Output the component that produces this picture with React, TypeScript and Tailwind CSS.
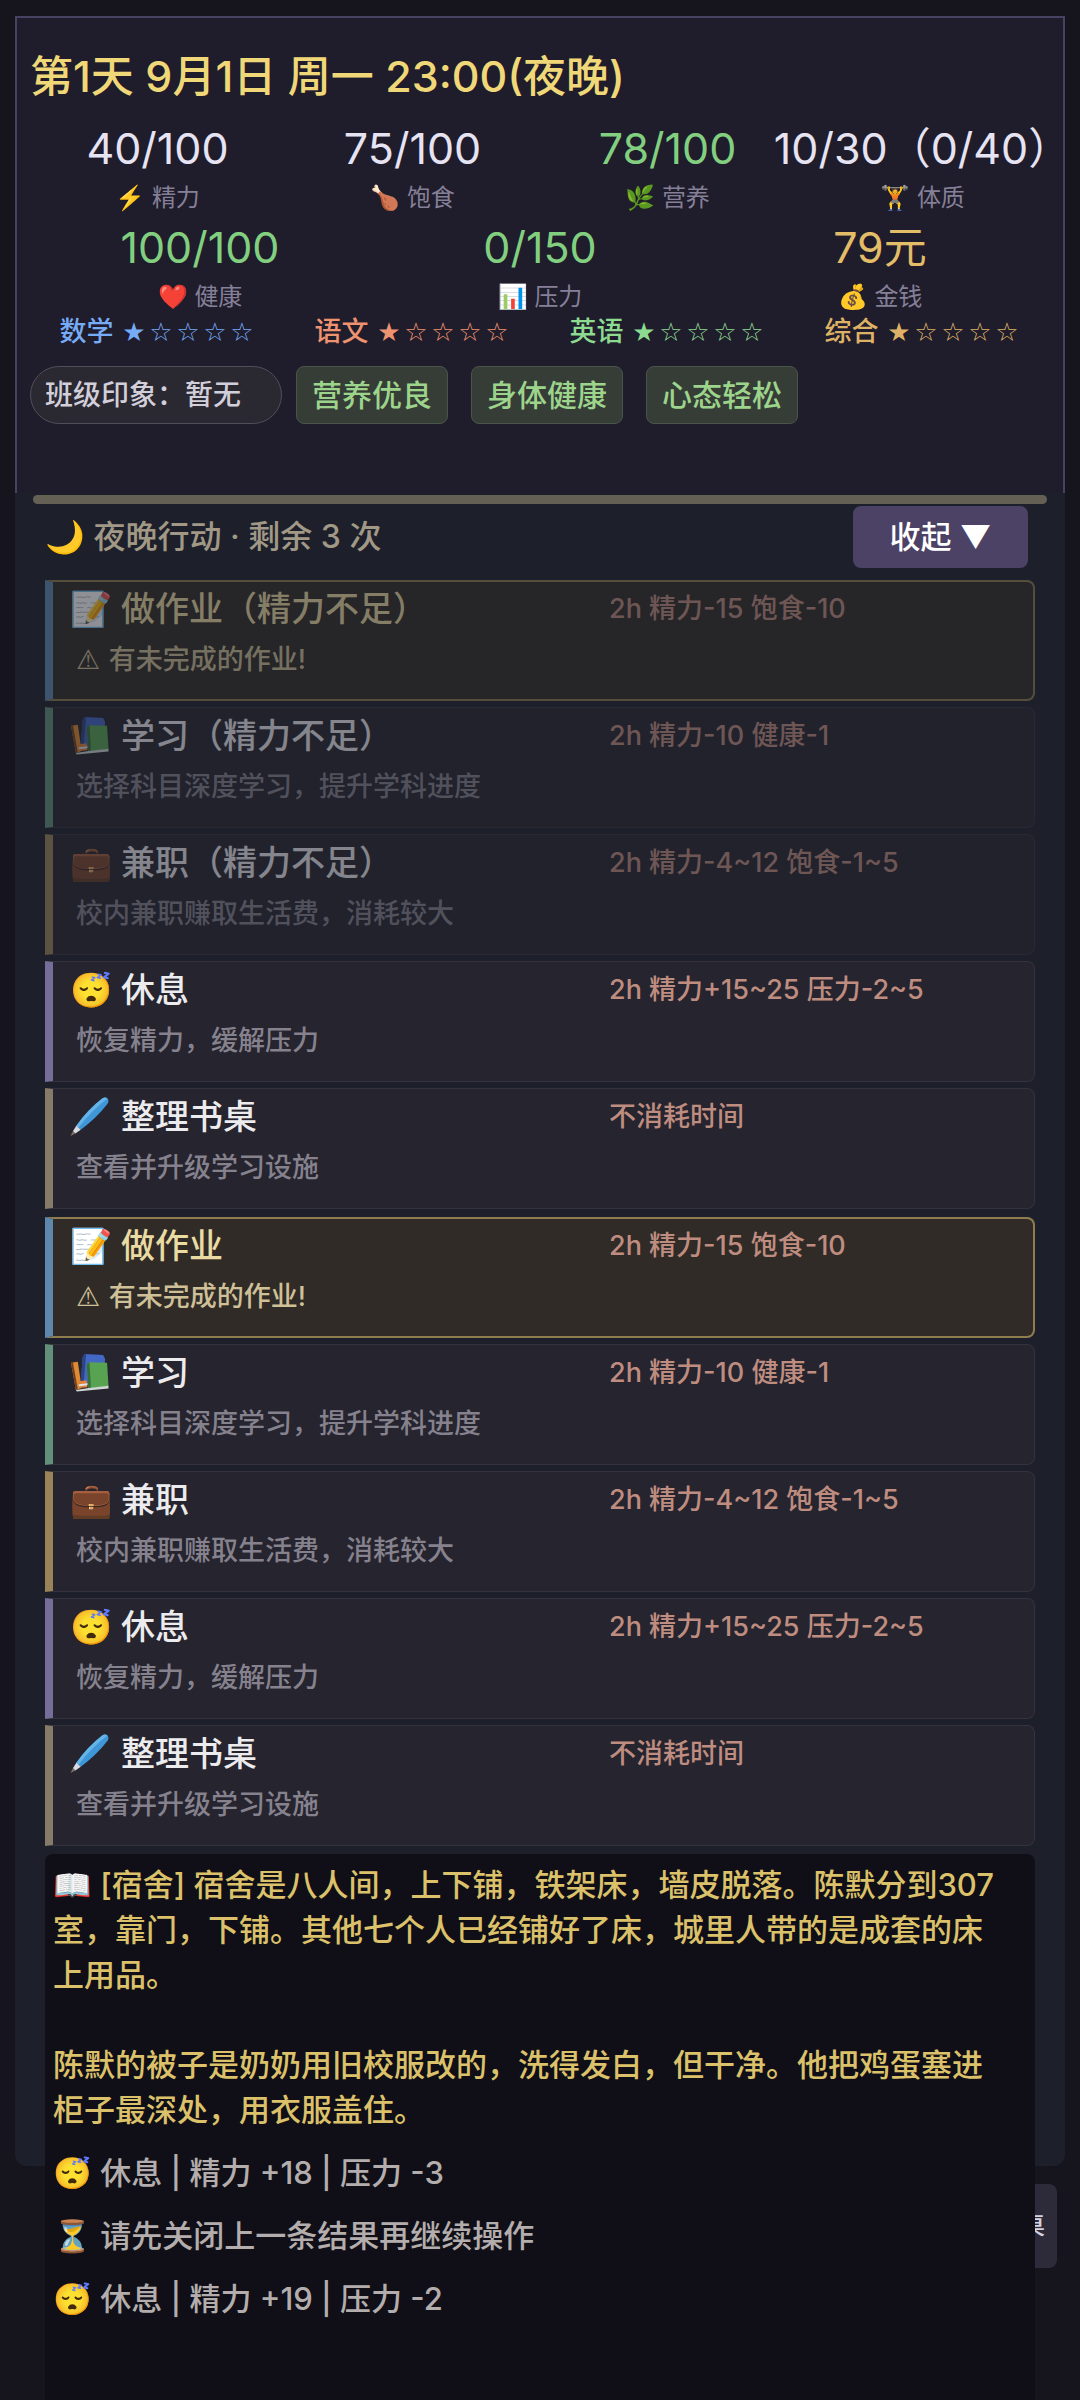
import { useState } from "react";
import type { ReactNode } from "react";
import clsx from "clsx";

function BooksIcon() {
  return (
    <svg viewBox="0 0 40 40" className="mr-[3px] inline-block size-[39px] align-[-7px]" aria-hidden="true">
      <path d="M1 10 L8 9 L12 36 L6 38 Z" fill="#e08a32" />
      <path d="M1 10 L3 9.6 L8 37.4 L6 38 Z" fill="#6b4020" />
      <path d="M13 4 L15 1 L34 2 L36 6 L34 33 L11 31 Z" fill="#4367c4" />
      <path d="M13 4 L15 1 L16.5 1.2 L14 31.3 L11 31 Z" fill="#2c4485" />
      <path d="M9 29 L17 28 L18 35 L9 36 Z" fill="#e0803a" />
      <path d="M9 32 L18 31 L18 33 L9 34 Z" fill="#dfe3ea" />
      <path d="M17 12 L20 9.5 L38 10 L39.5 34 L19 36.5 Z" fill="#58a352" />
      <path d="M17 12 L20 9.5 L21.5 36 L19 36.5 Z" fill="#376f38" />
      <path d="M6 38 L19 36 L39.5 33.5 L39.5 36.5 L7 39.5 Z" fill="#cfd6d2" />
    </svg>
  );
}

function PenIcon() {
  return (
    <svg viewBox="0 0 40 40" className="mr-[3px] inline-block size-[39px] align-[-7px]" aria-hidden="true">
      <path d="M33 1.5 Q36 -0.5 38.5 1.5 Q40.5 4 38.5 7 Q27 22 11 33.5 L6.5 29.5 Q18 13 33 1.5 Z" fill="#3f97d8" />
      <path d="M33 1.5 Q36 -0.5 38.5 1.5 Q24 12 8.5 31.5 L6.5 29.5 Q18 13 33 1.5 Z" fill="#64b4e8" />
      <path d="M6.5 29.5 L11 33.5 L5.5 37.5 L3 35 Z" fill="#d7dce2" />
      <path d="M3 35 L5.5 37.5 L0.5 40 Z" fill="#84705f" />
    </svg>
  );
}

// --- GAME DATA ---
const MAIN_STATS = [
  { value: "40/100", icon: "⚡", label: "精力", color: "text-[#e6e3f3]" },
  { value: "75/100", icon: "🍗", label: "饱食", color: "text-[#e6e3f3]" },
  { value: "78/100", icon: "🌿", label: "营养", color: "text-[#82cf80]" },
  { value: "10/30（0/40）", icon: "🏋️", label: "体质", color: "text-[#e6e3f3]" },
];

const SIDE_STATS = [
  { value: "100/100", icon: "❤️", label: "健康", color: "text-[#82cf80]" },
  { value: "0/150", icon: "📊", label: "压力", color: "text-[#82cf80]" },
  { value: "79元", icon: "💰", label: "金钱", color: "text-[#e3bd68]" },
];

const SUBJECTS = [
  { name: "数学", stars: 1, color: "text-[#76abf5]" },
  { name: "语文", stars: 1, color: "text-[#ee9370]" },
  { name: "英语", stars: 1, color: "text-[#8cdb91]" },
  { name: "综合", stars: 1, color: "text-[#deb266]" },
];

const TAGS = ["营养优良", "身体健康", "心态轻松"];

type Action = {
  icon: ReactNode;
  name: string;
  desc: string;
  cost: string;
  bar: string;
  urgent?: boolean;
  disabled?: boolean;
};

const HOMEWORK: Action = { icon: "📝", name: "做作业", desc: "有未完成的作业!", cost: "2h 精力-15 饱食-10", bar: "border-l-[#5f86ac]", urgent: true };
const STUDY: Action = { icon: <BooksIcon />, name: "学习", desc: "选择科目深度学习，提升学科进度", cost: "2h 精力-10 健康-1", bar: "border-l-[#62907b]" };
const JOB: Action = { icon: "💼", name: "兼职", desc: "校内兼职赚取生活费，消耗较大", cost: "2h 精力-4~12 饱食-1~5", bar: "border-l-[#9a8457]" };
const REST: Action = { icon: "😴", name: "休息", desc: "恢复精力，缓解压力", cost: "2h 精力+15~25 压力-2~5", bar: "border-l-[#766d98]" };
const DESK: Action = { icon: <PenIcon />, name: "整理书桌", desc: "查看并升级学习设施", cost: "不消耗时间", bar: "border-l-[#857b68]" };

const ACTION_GROUPS: Action[][] = [
  [
    { ...HOMEWORK, name: "做作业（精力不足）", disabled: true },
    { ...STUDY, name: "学习（精力不足）", disabled: true },
    { ...JOB, name: "兼职（精力不足）", disabled: true },
    REST,
    DESK,
  ],
  [HOMEWORK, STUDY, JOB, REST, DESK],
];

const STORY = [
  "📖 [宿舍] 宿舍是八人间，上下铺，铁架床，墙皮脱落。陈默分到307室，靠门，下铺。其他七个人已经铺好了床，城里人带的是成套的床上用品。",
  "陈默的被子是奶奶用旧校服改的，洗得发白，但干净。他把鸡蛋塞进柜子最深处，用衣服盖住。",
];

const LOG = [
  "😴 休息 | 精力 +18 | 压力 -3",
  "⏳ 请先关闭上一条结果再继续操作",
  "😴 休息 | 精力 +19 | 压力 -2",
];

function Stat({ value, icon, label, color }: (typeof MAIN_STATS)[number]) {
  return (
    <div className="flex flex-col items-center font-normal whitespace-nowrap">
      <div className={clsx("text-[43px] leading-[56px]", color)}>{value}</div>
      <div className="text-2xl leading-[43px] text-[#858098]">
        {icon} {label}
      </div>
    </div>
  );
}

function ActionCard({ icon, name, desc, cost, bar, urgent, disabled }: Action) {
  return (
    <button
      type="button"
      disabled={disabled}
      className={clsx(
        "grid h-[121px] w-full grid-cols-[539px_1fr] grid-rows-[54px_50px] rounded-r-lg border-l-8 pl-[17px] text-left",
        bar,
        urgent
          ? "border-y-2 border-r-2 border-y-[#8f7d50] border-r-[#8f7d50] bg-[#302b27]"
          : "border-y border-r border-y-[#34323c] border-r-[#34323c] bg-[#26242e] pt-px",
        disabled && "opacity-50"
      )}
    >
      <span className={clsx("text-[34px] leading-[54px]", urgent ? "text-[#eadba2]" : "text-[#ececee]")}>
        {icon} {name}
      </span>
      <span className="text-[27px] leading-[54px] text-[#bf8d80]">{cost}</span>
      <span
        className={clsx(
          "col-span-2 pl-[6px] text-[27px] leading-[48px]",
          urgent ? "text-[#cfc097]" : "text-[#85828e]"
        )}
      >
        {urgent && <span className="font-['DejaVu_Sans']">⚠ </span>}
        {desc}
      </span>
    </button>
  );
}

export default function App() {
  const [open, setOpen] = useState(true);

  return (
    <div
      lang="zh-CN"
      className="h-screen overflow-hidden bg-[#16151e] px-[15px] pt-4 font-['Inter','Noto_Sans_CJK_SC',sans-serif] font-medium"
    >
      <main className="h-[calc(90vh-10px)] rounded-b-xl bg-[#1d202b]">
        {/* Status header */}
        <header className="h-[477px] border-2 border-b-0 border-[#474463] bg-[#1f1c2b] px-[13px] pt-7">
          <h1 className="text-[43px] leading-[60px] text-[#f0d878]">
            第1天 9月1日 周一 23:00(夜晚)
          </h1>

          <div className="mt-[14px] grid grid-cols-4">
            {MAIN_STATS.map((stat) => (
              <Stat key={stat.label} {...stat} />
            ))}
          </div>
          <div className="grid grid-cols-3">
            {SIDE_STATS.map((stat) => (
              <Stat key={stat.label} {...stat} />
            ))}
          </div>

          <div className="grid grid-cols-4">
            {SUBJECTS.map((subject) => (
              <div
                key={subject.name}
                className={clsx("flex items-center justify-center gap-[7px] text-[27px] leading-[28px]", subject.color)}
              >
                <span>{subject.name}</span>
                <span className="flex">
                  {[0, 1, 2, 3, 4].map((i) => (
                    <span key={i} className="w-[27px] text-center font-['DejaVu_Sans'] text-[26px] font-normal">
                      {i < subject.stars ? "★" : "☆"}
                    </span>
                  ))}
                </span>
              </div>
            ))}
          </div>

          <div className="mt-5 flex gap-[23px]">
            <div className="-mr-[9px] h-[58px] w-[252px] rounded-full border border-[#504e58] bg-[#2a2831] pl-[14px] text-[28px] leading-[56px] text-[#d2cfdb]">
              班级印象：暂无
            </div>
            {TAGS.map((tag) => (
              <div
                key={tag}
                className="h-[58px] rounded-lg border border-[#4a5549] bg-[#363d37] px-[15px] text-[30px] leading-[56px] text-[#9dd48c]"
              >
                {tag}
              </div>
            ))}
          </div>
        </header>

        {/* Evening actions */}
        <div className="mx-[18px] mt-[2px] h-[9px] rounded-full bg-[#646054]" />
        <div className="mx-[30px]">
          <div className="mt-[2px] flex items-center justify-between pr-[7px]">
            <h2 className="text-[32px] leading-[62px] text-[#a19886]">
              🌙 夜晚行动 · 剩余 3 次
            </h2>
            <button
              type="button"
              onClick={() => setOpen(!open)}
              className="h-[62px] w-[175px] rounded-lg bg-[#4c4265] text-[31px] text-white"
            >
              收起 {open ? "▼" : "▲"}
            </button>
          </div>

          {open && (
            <div className="mt-3 flex flex-col gap-2">
              {ACTION_GROUPS.map((group, g) => (
                <div key={g} className="flex flex-col gap-[6px]">
                  {group.map((action) => (
                    <ActionCard key={action.name} {...action} />
                  ))}
                </div>
              ))}
            </div>
          )}

          {/* Story and result log, grows past the panel */}
          <section className="relative z-10 mt-2 flex min-h-[60vh] flex-col gap-[18px] rounded-t-lg bg-[#100f17] pt-2 pr-[29px] pl-2 text-[31px] leading-[45px] text-[#b3aead]">
            <div className="flex flex-col gap-[45px] text-[#dcc16b]">
              {STORY.map((text) => (
                <p key={text}>{text}</p>
              ))}
            </div>
            {LOG.map((line) => (
              <p key={line}>{line}</p>
            ))}
          </section>
        </div>
      </main>

      <nav className="mt-[18px] flex justify-end pr-2">
        <button
          type="button"
          className="h-[84px] rounded-lg bg-[#2d2a39] px-3 text-2xl text-[#d5d2e2]"
        >
          书桌
        </button>
      </nav>
    </div>
  );
}
